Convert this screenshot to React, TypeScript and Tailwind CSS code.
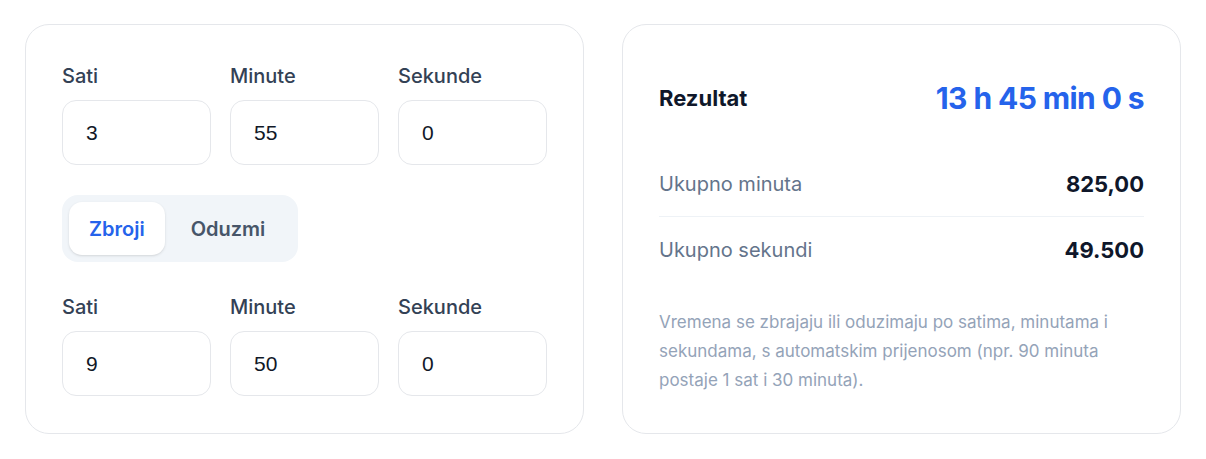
import { useState } from "react";

type Time = { h: string; m: string; s: string };

function TimeFields({ value, onChange }: { value: Time; onChange: (t: Time) => void }) {
    const fields: { key: keyof Time; label: string }[] = [
        { key: "h", label: "Sati" },
        { key: "m", label: "Minute" },
        { key: "s", label: "Sekunde" },
    ];
    return (
        <div className="grid grid-cols-3 gap-[19px]">
            {fields.map((f) => (
                <label key={f.key} className="flex flex-col">
                    <span className="text-[20px] leading-[30px] font-medium text-[#334155]">{f.label}</span>
                    <input
                        value={value[f.key]}
                        onChange={(e) => onChange({ ...value, [f.key]: e.target.value })}
                        className="mt-[9px] h-[65px] w-full rounded-[14px] border border-[#e5e7eb] bg-white px-[23px] text-[21px] text-[#111827] outline-none font-['Liberation_Sans',Arial,sans-serif]"
                    />
                </label>
            ))}
        </div>
    );
}

export default function App() {
    const [a, setA] = useState<Time>({ h: "3", m: "55", s: "0" });
    const [b, setB] = useState<Time>({ h: "9", m: "50", s: "0" });
    const [mode, setMode] = useState<"add" | "sub">("add");

    const toSec = (t: Time) => (Number(t.h) || 0) * 3600 + (Number(t.m) || 0) * 60 + (Number(t.s) || 0);
    const total = Math.abs(mode === "add" ? toSec(a) + toSec(b) : toSec(a) - toSec(b));
    const h = Math.floor(total / 3600);
    const m = Math.floor((total % 3600) / 60);
    const s = total % 60;

    return (
        <main className="flex gap-[38px] px-[25px] pt-[24px] bg-white font-['Inter',sans-serif] text-[#0f172a]">
            <section className="w-[559px] h-[410px] rounded-[24px] border border-[#e5e7eb] px-[36px] pt-[36px]">
                <TimeFields value={a} onChange={setA} />
                <div className="mt-[30px] inline-flex rounded-[16px] bg-[#f1f5f9] p-[7px]">
                    <button
                        onClick={() => setMode("add")}
                        className={`h-[53px] rounded-[13px] px-[20px] text-[20px] font-semibold ${mode === "add" ? "bg-white text-[#2563eb] shadow-sm" : "text-[#475569]"}`}
                    >
                        Zbroji
                    </button>
                    <button
                        onClick={() => setMode("sub")}
                        className={`h-[53px] rounded-[13px] px-[26px] text-[20px] font-semibold ${mode === "sub" ? "bg-white text-[#2563eb] shadow-sm" : "text-[#475569]"}`}
                    >
                        Oduzmi
                    </button>
                </div>
                <div className="mt-[30px]">
                    <TimeFields value={b} onChange={setB} />
                </div>
            </section>

            <section className="w-[559px] h-[410px] rounded-[24px] border border-[#e5e7eb] px-[36px] pt-[57px]">
                <div className="flex items-center justify-between h-[32px]">
                    <h2 className="text-[22px] font-bold text-[#0f172a]">Rezultat</h2>
                    <p className="text-[30px] font-bold tracking-[-0.02em] text-[#2563eb]">
                        {h} h {m} min {s} s
                    </p>
                </div>
                <div className="mt-[54px] flex items-center justify-between h-[32px]">
                    <span className="text-[20px] text-[#64748b]">Ukupno minuta</span>
                    <span className="text-[22px] font-bold">{(total / 60).toFixed(2).replace(".", ",")}</span>
                </div>
                <div className="mt-[16px] border-t border-[#eef2f6]" />
                <div className="mt-[17px] flex items-center justify-between h-[32px]">
                    <span className="text-[20px] text-[#64748b]">Ukupno sekundi</span>
                    <span className="text-[22px] font-bold">{total.toLocaleString("de-DE")}</span>
                </div>
                <p className="mt-[42px] text-[17px] leading-[29px] text-[#94a3b8]">
                    Vremena se zbrajaju ili oduzimaju po satima, minutama i sekundama, s automatskim prijenosom (npr. 90 minuta postaje 1 sat i 30 minuta).
                </p>
            </section>
        </main>
    );
}
